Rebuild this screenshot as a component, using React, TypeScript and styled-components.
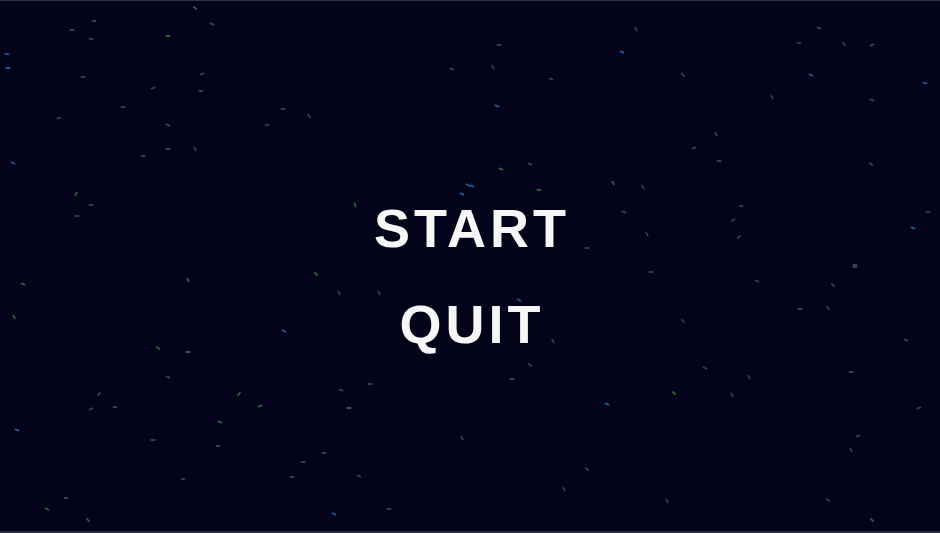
import styled, { createGlobalStyle } from "styled-components";

const GlobalStyle = createGlobalStyle`
  html, body, #root {
    margin: 0;
    height: 100%;
  }
  body {
    background: #03041a;
  }
`

const Screen = styled.div`
  position: relative;
  box-sizing: border-box;
  width: 100vw;
  height: 100vh;
  overflow: hidden;
  background: #03041a;
  border-top: 1px solid #34363f;
  border-bottom: 2px solid #2c2e36;
  display: flex;
  align-items: center;
  justify-content: center;
`

const StarLayer = styled.svg`
  position: absolute;
  inset: 0;
  width: 100%;
  height: 100%;
  pointer-events: none;
`

const Menu = styled.nav`
  position: relative;
  display: flex;
  flex-direction: column;
  align-items: center;
  gap: 34px;
  margin-top: 20px;
`

const MenuButton = styled.button`
  background: none;
  border: none;
  padding: 0 0 0 4px;
  margin: 0;
  cursor: pointer;
  color: #f6f6f6;
  font-family: "Liberation Sans", Arial, sans-serif;
  font-weight: 700;
  font-size: 54px;
  line-height: 62px;
  letter-spacing: 4px;

  &:hover {
    color: #ffffff;
  }
`

type Tint = "g" | "n" | "b"

// [x, y, tint, angle]
const stars: [number, number, Tint, number][] = [
  [195, 7, "n", 40], [212, 23, "g", 20], [94, 20, "g", 0], [72, 29, "g", 0],
  [91, 38, "g", 10], [168, 35, "n", 0], [7, 53, "b", 10], [8, 67, "b", 0],
  [202, 73, "g", -20], [201, 90, "g", 0], [153, 87, "g", -20], [83, 76, "g", 0],
  [123, 106, "g", 0], [59, 117, "g", -15], [452, 68, "g", 20], [283, 108, "g", 0],
  [309, 115, "g", 60], [267, 124, "g", -10], [168, 124, "g", 20], [168, 148, "g", 0],
  [195, 148, "g", 60], [143, 155, "g", 0], [13, 162, "b", 30], [76, 193, "n", -60],
  [91, 204, "g", 0], [77, 215, "g", 0], [355, 204, "n", 70], [462, 193, "b", 20],
  [468, 184, "b", 30],
  [636, 28, "g", 60], [499, 44, "g", 0], [622, 51, "b", 20], [819, 27, "g", 20],
  [799, 42, "g", 10], [844, 43, "g", 50], [872, 44, "g", -20], [493, 66, "g", 60],
  [551, 78, "g", 20], [683, 74, "g", 45], [811, 74, "b", 30], [925, 82, "b", 10],
  [497, 105, "b", 20], [772, 96, "g", 60], [872, 99, "g", 20], [716, 133, "g", 60],
  [694, 147, "g", -20], [719, 160, "g", 0], [871, 163, "g", 40], [501, 168, "n", 20],
  [530, 163, "g", 20], [472, 185, "b", 20], [539, 189, "n", 0], [613, 182, "n", 60],
  [643, 186, "g", 60], [741, 205, "g", 10], [624, 211, "g", 20], [928, 211, "g", 10],
  [733, 219, "g", -30], [913, 227, "b", 20], [647, 233, "g", 60], [739, 236, "g", -40],
  [587, 247, "g", 0], [855, 264, "g", 0],
  [23, 283, "n", 20], [188, 279, "n", 60], [316, 273, "n", 45], [339, 292, "g", 60],
  [379, 292, "g", 60], [14, 316, "n", 60], [284, 330, "b", 30], [158, 347, "n", 40],
  [188, 351, "n", 0], [168, 376, "g", 20], [99, 393, "g", -40], [91, 408, "g", -30],
  [115, 406, "g", 0], [239, 393, "n", -50], [260, 405, "n", -20], [341, 389, "g", 20],
  [349, 407, "n", 0], [370, 383, "g", 0], [17, 429, "b", 20], [220, 421, "n", 20],
  [153, 439, "g", 0], [218, 445, "g", 0], [462, 437, "g", 60], [303, 461, "g", 0],
  [324, 452, "g", 0], [292, 476, "g", 0], [359, 475, "g", 20], [183, 478, "g", -10],
  [66, 497, "g", 0], [47, 508, "n", 30], [88, 519, "n", 50], [334, 513, "b", 30],
  [389, 508, "g", 0],
  [651, 271, "g", 0], [757, 280, "g", 20], [833, 284, "g", 40], [855, 266, "g", 0],
  [519, 299, "b", 30], [800, 308, "g", 0], [828, 307, "g", 50], [683, 320, "g", 50],
  [553, 340, "g", 60], [906, 339, "g", 20], [530, 364, "g", 40], [512, 378, "g", 0],
  [705, 367, "g", 30], [749, 376, "g", 60], [851, 371, "g", 0], [674, 392, "n", 40],
  [732, 394, "g", 60], [607, 403, "b", 20], [919, 407, "g", -20], [858, 435, "g", -20],
  [851, 449, "g", 60], [587, 468, "g", 40], [564, 488, "g", 60], [667, 500, "g", 60],
  [828, 499, "g", 40], [872, 519, "n", 45],
]

const tints: Record<Tint, string> = {
  g: "#46524a",
  n: "#2c7038",
  b: "#2c62a0",
}

// small streaks, slightly softened so they read as distant specks
const Starfield = () => (
  <StarLayer viewBox="0 0 940 530" preserveAspectRatio="none">
    <defs>
      <filter id="speck-glow" x="-50%" y="-50%" width="200%" height="200%">
        <feGaussianBlur stdDeviation="0.45"/>
      </filter>
    </defs>
    <g filter="url(#speck-glow)">
      {stars.map(([x, y, t, a], i) => (
        <line
          key={i}
          x1={x - 1.6}
          y1={y}
          x2={x + 1.6}
          y2={y}
          stroke={tints[t]}
          strokeWidth={1.8}
          strokeLinecap="round"
          opacity={t === "g" ? 0.8 : 0.9}
          transform={`rotate(${a} ${x} ${y})`}
        />
      ))}
    </g>
  </StarLayer>
)

export default function App() {
  return (
    <>
      <GlobalStyle/>
      <Screen>
        <Starfield/>
        <Menu>
          <MenuButton>START</MenuButton>
          <MenuButton>QUIT</MenuButton>
        </Menu>
      </Screen>
    </>
  )
}
